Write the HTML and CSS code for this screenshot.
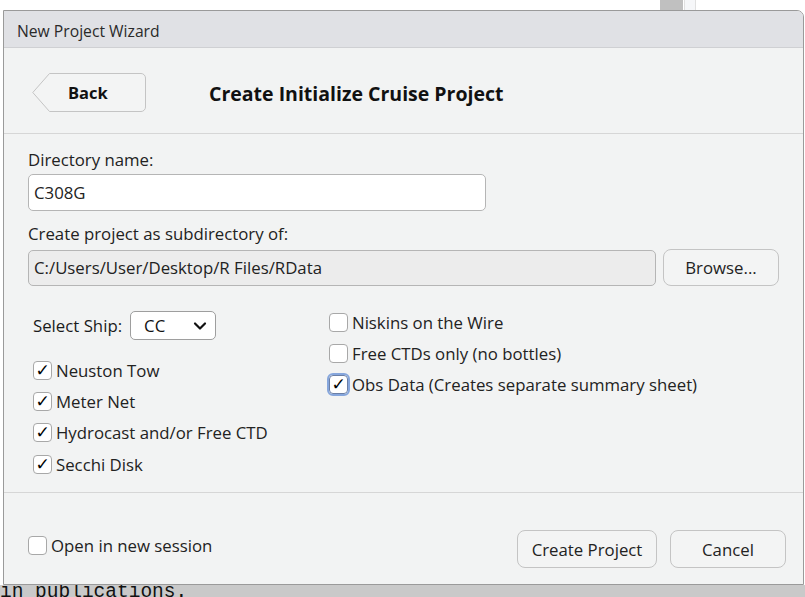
FILE: index.html
```html
<!DOCTYPE html>
<html>
<head>
<meta charset="utf-8">
<link rel="stylesheet" href="styles.css">
</head>
<body>
<div class="backdrop">
  <div class="bg-main">
    <div class="bg-scroll"></div>
    <div class="bg-sidebar"></div>
  </div>
  <div class="bg-bottom"><span class="mono">in publications.</span></div>
</div>

<div class="dialog">
  <div class="titlebar">New Project Wizard</div>
  <div class="header">
    <button class="back">
      <svg class="back-shape" width="115" height="40" viewBox="0 0 115 40">
        <path d="M17.5 0.5 H109 a4.5 4.5 0 0 1 4.5 4.5 V34 a4.5 4.5 0 0 1 -4.5 4.5 H17.5 L0.8 19.5 Z" fill="#f3f4f4" stroke="#c4c4c4" stroke-width="1"/>
      </svg>
      <span class="back-label">Back</span>
    </button>
    <h1 class="heading">Create Initialize Cruise Project</h1>
  </div>
  <div class="content">
    <label class="field-label">Directory name:</label>
    <div class="input">C308G</div>
    <label class="field-label second">Create project as subdirectory of:</label>
    <div class="path-row">
      <div class="input path">C:/Users/User/Desktop/R Files/RData</div>
      <button class="btn browse">Browse...</button>
    </div>
    <div class="options">
      <div class="col left">
        <div class="ship">
          <span>Select Ship:</span>
          <div class="select">CC
            <svg width="14" height="10" viewBox="0 0 14 10"><path d="M2 2.5 L7 7.5 L12 2.5" fill="none" stroke="#111" stroke-width="2.2" stroke-linecap="round" stroke-linejoin="round"/></svg>
          </div>
        </div>
        <div class="checks">
          <div class="check"><span class="box on">✓</span>Neuston Tow</div>
          <div class="check"><span class="box on">✓</span>Meter Net</div>
          <div class="check"><span class="box on">✓</span>Hydrocast and/or Free CTD</div>
          <div class="check"><span class="box on">✓</span>Secchi Disk</div>
        </div>
      </div>
      <div class="col right">
        <div class="check"><span class="box"></span>Niskins on the Wire</div>
        <div class="check"><span class="box"></span>Free CTDs only (no bottles)</div>
        <div class="check"><span class="box on focus">✓</span>Obs Data (Creates separate summary sheet)</div>
      </div>
    </div>
  </div>
  <div class="footer">
    <div class="check session"><span class="box"></span>Open in new session</div>
    <div class="actions">
      <button class="btn create">Create Project</button>
      <button class="btn cancel">Cancel</button>
    </div>
  </div>
</div>
</body>
</html>
```

FILE: styles.css
```css
* { box-sizing: border-box; }
html, body {
  margin: 0;
  padding: 0;
  width: 805px;
  height: 597px;
  overflow: hidden;
  background: #ffffff;
  font-family: "Open Sans", "Noto Sans", sans-serif;
}
.backdrop {
  width: 805px;
  height: 597px;
  display: flex;
  flex-direction: column;
}
.bg-main {
  flex: 1;
  position: relative;
  background: #fff;
}
.bg-scroll {
  position: absolute;
  left: 660px;
  top: 0;
  width: 23px;
  height: 12px;
  background: #c0c0c0;
}
.bg-sidebar {
  position: absolute;
  left: 684px;
  top: 0;
  width: 12px;
  height: 12px;
  border-left: 1px solid #e0e0e0;
  border-right: 1px solid #e0e0e0;
  background: #f6f7f9;
}
.bg-bottom {
  height: 22px;
  margin-top: -10px;
  background: #c9c9c9;
  overflow: hidden;
}
.mono {
  font-family: "Liberation Mono", monospace;
  font-size: 19.5px;
  line-height: 22px;
  display: block;
  margin-top: 6px;
  color: #111;
  white-space: nowrap;
}

.dialog {
  position: absolute;
  left: 3px;
  top: 10px;
  width: 801px;
  height: 575px;
  background: #f2f3f3;
  border: 1px solid #9a9a9a;
  border-radius: 0 7px 0 0;
  overflow: hidden;
  display: flex;
  flex-direction: column;
  color: #1b1b1b;
  font-size: 16.8px;
}
.titlebar {
  height: 37px;
  background: #e0e1e5;
  border-bottom: 1px solid #cfd0d3;
  font-size: 15.7px;
  line-height: 40px;
  padding-left: 13px;
  color: #2a2a2a;
}
.header {
  height: 86px;
  border-bottom: 1px solid #d6d6d6;
  display: flex;
  align-items: center;
  padding-left: 28px;
}
.back {
  position: relative;
  width: 115px;
  height: 40px;
  padding: 0;
  border: 0;
  background: transparent;
  font-family: inherit;
  margin-top: 4px;
}
.back-shape {
  position: absolute;
  left: 0;
  top: 0;
}
.back-label {
  position: relative;
  display: block;
  font-weight: 700;
  font-size: 16.5px;
  color: #111;
  padding-left: 36px;
  text-align: left;
  margin-top: -1px;
}
.heading {
  margin: 0 0 0 62px;
  font-size: 19.5px;
  font-weight: 700;
  color: #111;
  padding-top: 5px;
}
.content {
  flex: 1;
  padding: 14px 24px 0 24px;
  display: flex;
  flex-direction: column;
  border-bottom: 1px solid #d6d6d6;
}
.field-label {
  font-size: 16.8px;
  line-height: 23px;
  color: #222;
  margin-bottom: 3px;
}
.field-label.second {
  margin-top: 11px;
  margin-bottom: 4px;
}
.input {
  width: 458px;
  height: 37px;
  background: #fff;
  border: 1px solid #b5b5b5;
  border-radius: 5px;
  font-size: 16.8px;
  line-height: 35px;
  padding-left: 5px;
  color: #222;
}
.path-row {
  display: flex;
  gap: 7px;
  align-items: center;
}
.input.path {
  width: 628px;
  height: 36px;
  background: #ececec;
  line-height: 34px;
}
.btn {
  font-family: inherit;
  font-size: 16.8px;
  color: #222;
  background: #f3f4f4;
  border: 1px solid #c4c4c4;
  border-radius: 8px;
  padding: 0;
}
.browse {
  width: 116px;
  height: 37px;
}
.options {
  display: flex;
  margin-top: 25px;
}
.col.left {
  width: 301px;
  padding-left: 5px;
}
.ship {
  display: flex;
  align-items: center;
  gap: 8px;
  font-size: 16.8px;
  height: 29px;
}
.select {
  width: 86px;
  height: 29px;
  border: 1px solid #9e9e9e;
  border-radius: 5px;
  background: #fff;
  display: flex;
  align-items: center;
  justify-content: space-between;
  padding: 0 8px 0 13px;
  font-size: 16.8px;
  color: #111;
}
.checks {
  margin-top: 19px;
  display: flex;
  flex-direction: column;
  gap: 9.4px;
}
.col.right {
  display: flex;
  flex-direction: column;
  gap: 9.4px;
  padding-top: 0;
}
.check {
  display: flex;
  align-items: center;
  font-size: 16.8px;
  height: 22px;
  color: #222;
}
.box {
  width: 19px;
  height: 19px;
  border: 1px solid #a8a8a8;
  border-radius: 4px;
  background: #fff;
  margin-right: 4px;
  display: flex;
  align-items: center;
  justify-content: center;
  font-size: 17px;
  line-height: 1;
  color: #000;
  font-family: "DejaVu Sans", sans-serif;
}
.box.focus {
  outline: 2px solid #86a6dc;
  outline-offset: 0;
  border-color: #6b7fa6;
}
.footer {
  height: 91px;
  display: flex;
  align-items: flex-end;
  justify-content: space-between;
  padding: 0 17px 16px 24px;
}
.session {
  margin-bottom: 12px;
}
.actions {
  display: flex;
  gap: 13px;
}
.create {
  width: 140px;
  height: 38px;
}
.cancel {
  width: 116px;
  height: 38px;
}
```
